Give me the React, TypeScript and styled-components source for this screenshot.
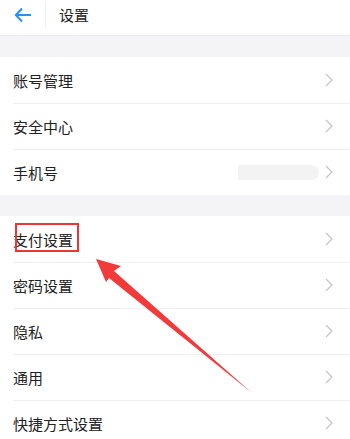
import React from "react";
import styled, { createGlobalStyle } from "styled-components";

const GlobalStyle = createGlobalStyle`
    html, body {
        margin: 0;
        padding: 0;
        background: #ffffff;
    }
    body {
        font-family: "Noto Sans CJK SC", "Noto Sans", sans-serif;
        color: #222222;
    }
`;

const Page = styled.div`
    position: relative;
    width: 350px;
    height: 439px;
    overflow: hidden;
    background: #ffffff;
`;

const Header = styled.div`
    display: flex;
    align-items: center;
    height: 36px;
    border-bottom: 1px solid #ececec;
    box-sizing: border-box;
`;

const BackButton = styled.div`
    display: flex;
    align-items: center;
    justify-content: center;
    width: 46px;
    height: 26px;
    margin-top: -6px;
    border-right: 1px solid #f0f0f0;
    box-sizing: border-box;
`;

const Title = styled.div`
    margin-left: 13px;
    margin-top: -6px;
    font-size: 15px;
    color: #222;
`;

const Gap = styled.div<{ h: number }>`
    height: ${({ h }) => h}px;
    background: #f4f4f7;
`;

const Row = styled.div`
    position: relative;
    display: flex;
    align-items: center;
    height: 46px;
    padding: 0 17px 0 13px;
    box-sizing: border-box;

    & + &::before {
        content: "";
        position: absolute;
        top: 0;
        left: 13px;
        right: 0;
        border-top: 1px solid #efefef;
    }
`;

const Label = styled.div`
    flex: 1;
    font-size: 15px;
    color: #222;
`;

const Masked = styled.div`
    width: 81px;
    height: 15px;
    margin-right: 6px;
    border-radius: 0 8px 8px 0;
    background: #f3f3f3;
`;

const Chevron = () => (
    <svg width="8" height="14" viewBox="0 0 8 14">
        <path d="M1 1 L7 7 L1 13" fill="none" stroke="#c4c4c8" strokeWidth="1.2" />
    </svg>
);

const Highlight = styled.div`
    position: absolute;
    left: 15px;
    top: 223px;
    width: 64px;
    height: 29px;
    border: 2px solid #ee3535;
    box-sizing: border-box;
`;

const Pointer = styled.svg`
    position: absolute;
    left: 0;
    top: 0;
`;

interface Item {
    label: string;
    masked?: boolean;
}

const firstGroup: Item[] = [
    { label: "账号管理" },
    { label: "安全中心" },
    { label: "手机号", masked: true },
];

const secondGroup: Item[] = [
    { label: "支付设置" },
    { label: "密码设置" },
    { label: "隐私" },
    { label: "通用" },
    { label: "快捷方式设置" },
];

const renderRows = (items: Item[]) =>
    items.map((item) => (
        <Row key={item.label}>
            <Label>{item.label}</Label>
            {item.masked && <Masked />}
            <Chevron />
        </Row>
    ));

export default function App() {
    return (
        <Page>
            <GlobalStyle />
            <Header>
                <BackButton>
                    <svg width="18" height="16" viewBox="0 0 18 16">
                        <path
                            d="M17 8 H2 M8 1.5 L1.8 8 L8 14.5"
                            fill="none"
                            stroke="#2a8ff0"
                            strokeWidth="2"
                        />
                    </svg>
                </BackButton>
                <Title>设置</Title>
            </Header>
            <Gap h={21} />
            {renderRows(firstGroup)}
            <Gap h={21} />
            {renderRows(secondGroup)}
            <Highlight />
            <Pointer width="350" height="439" viewBox="0 0 350 439">
                <polygon
                    points="96,259 121,266 114,271 252,393 109,278 106,282"
                    fill="#f23a3a"
                />
            </Pointer>
        </Page>
    );
}
